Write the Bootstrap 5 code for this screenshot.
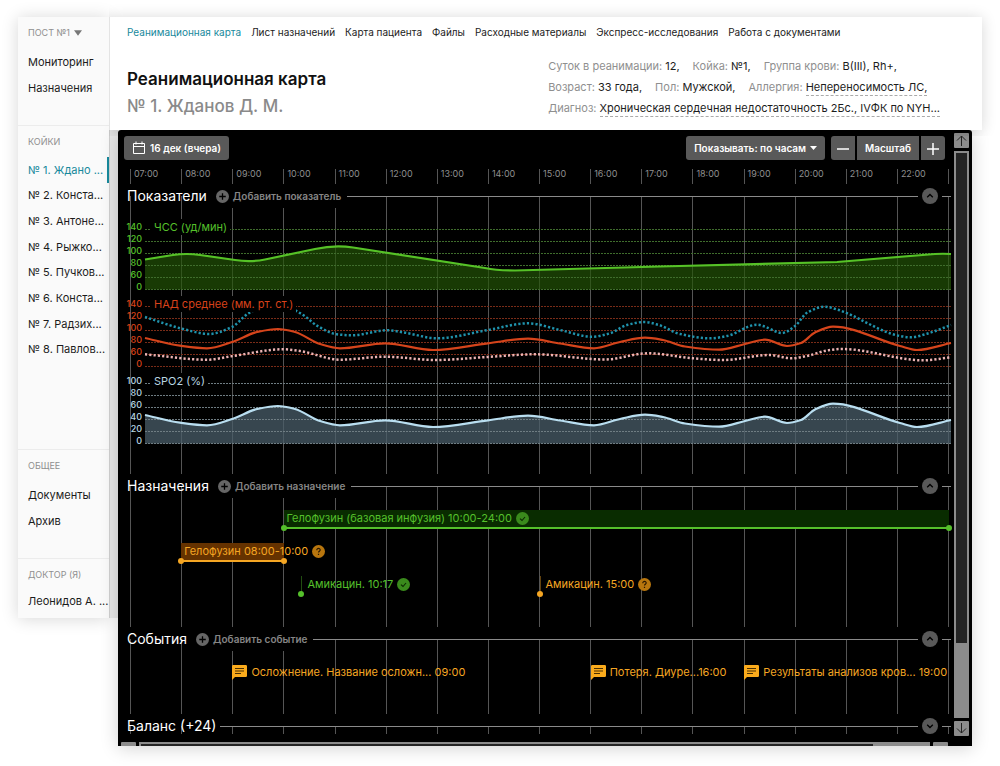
<!DOCTYPE html>
<html lang="ru">
<head>
<meta charset="utf-8">
<meta name="viewport" content="width=device-width, initial-scale=1">
<title>Реанимационная карта</title>
<link href="https://cdn.jsdelivr.net/npm/bootstrap@5.3.0/dist/css/bootstrap.min.css" rel="stylesheet">
<script src="https://cdn.jsdelivr.net/npm/bootstrap@5.3.0/dist/js/bootstrap.bundle.min.js"></script>
<style>
  :root { --teal: #17899c; --key: #595959; --bar: #8c8c8c; --rule: #8a8a8a; --ok: #55c02b; --wait: #f5a623; }
  body { font-family: Inter, "Liberation Sans", sans-serif; font-size: 11px; line-height: 16px; color: #1c1c1c; background: #fff; }
  a { color: inherit; text-decoration: none; }
  button { font-family: inherit; }
  .frame { padding: 17px 18px 21px; }

  .side { flex: 0 0 91px; min-width: 0; width: 91px; background: #fafafa; box-shadow: 1px 0 0 #cfcfcf, 9px 0 0 #e8e8e8, 0 1px 16px rgba(0,0,0,.16); }
  .side-part { padding: 8px 0 0 10px; border-top: 1px solid #ececec; }
  .side-part:first-child { border-top: 0; }
  .side-label { font-size: 9px; color: #8f8f8f; line-height: 16px; border: 0; background: none; padding: 0; margin: 0; font-weight: 400; }
  .side-list a { display: flex; align-items: center; height: 100%; white-space: nowrap; }
  .two { height: 52px; margin-top: 8px; }
  .beds { height: 205px; margin: 7px 0 87px; }
  .beds .active { color: var(--teal); border-right: 2px solid var(--teal); }
  .me { padding: 10px 0 9px; }

  .head { background: #fff; box-shadow: 0 1px 14px rgba(0,0,0,.16); height: 113px; padding: 7px 42px 0 17px; z-index: 2; clip-path: inset(-20px -20px -6px 0); border-left: 1px solid #e4e4e4; }
  .tabs { font-size: 10px; gap: 10px; white-space: nowrap; }
  .tabs .active { color: var(--teal); }
  .titles { padding-top: 10px; }
  .head h1, .head h2 { font-size: 17px; line-height: 27px; font-weight: 600; margin: 0; color: #111; }
  .head h2 { color: #8a8a8a; font-weight: 500; }
  .facts { flex: 0 0 389px; white-space: nowrap; line-height: 21px; }
  .facts dl { margin: 0; gap: 13px; }
  .facts dt { font-weight: 400; color: #8f8f8f; }
  .facts dd { margin: 0 0 0 3px; }
  .hint { border-bottom: 1px dashed #aaa; line-height: 16px; display: inline-block; }

  .board { background: #000; color: #fff; margin: 0 10px 0 9px; border-radius: 3px 3px 0 0; box-shadow: 0 2px 18px rgba(0,0,0,.18); z-index: 1; }
  .key { background: var(--key); color: #fff; border: 0; border-radius: 3px; height: 24px; font-size: 10px; font-weight: 600; line-height: 24px; padding: 0 8px; white-space: nowrap; }
  .tools { padding: 6px 6px 0; }
  .zoomer { gap: 2px; margin-left: 6px; }
  .zoomer .key { border-radius: 0; }
  .zoomer .key:first-child { border-radius: 3px 0 0 3px; }
  .zoomer .key:last-child { border-radius: 0 3px 3px 0; }
  .zoomer .square { width: 24px; padding: 0; }

  .ruler { margin: 9px 2px 0 12px; height: 15px; font-size: 9px; line-height: 9px; color: #8f8f8f; }
  .ruler span { flex: 1 1 0; border-left: 1px solid #555; padding-left: 3px; }
  .ruler span:last-child, .lines i:last-child { border-right: 1px solid #555; }
  .strip { position: relative; margin: 0 0 0 9px; }
  .lines { position: absolute; inset: 12px 2px 0 3px; display: flex; }
  .lines i { flex: 1 1 0; border-left: 1px solid #555; }
  .strip > :not(.lines) { position: relative; }
  .strip-head { height: 24px; }
  .strip-head h3 { font-size: 14px; line-height: 24px; margin: 0; font-weight: 400; white-space: nowrap; }
  .add { background: #000; border: 0; color: #858585; font-size: 10px; font-weight: 600; padding: 0 6px 0 9px; height: 24px; gap: 4px; white-space: nowrap; }
  .rule-line { height: 1px; background: var(--rule); }
  .fold { border: 0; background: #000; padding: 0 4px; height: 16px; display: flex; }

  .charts { padding: 13px 0 27px; gap: 5px; }
  .scale { width: 15px; margin-right: 3px; font-size: 9px; line-height: 12px; font-weight: 500; display: flex; flex-direction: column; align-items: flex-end; }
  .plot { display: block; flex: 1 1 0; min-width: 0; height: 72px; overflow: visible; }
  .plot path, .plot line { vector-effect: non-scaling-stroke; fill: none; }
  .chart-name { position: absolute; left: 24px; top: -2px; background: #000; padding: 0 3px; line-height: 16px; font-size: 11px; }
  .green { color: var(--ok); } .red { color: #d8421a; } .ice { color: #b8d6e2; }

  .rows { margin: 0 2px 0 3px; display: grid; grid-template-columns: repeat(16, minmax(0, 1fr)); white-space: nowrap; }
  .meds { padding-top: 12px; height: 129px; grid-auto-rows: 33px; align-items: start; }
  .dose { height: 19px; position: relative; border-bottom: 2px solid; padding-left: 3px; line-height: 17px; font-size: 11px; gap: 4px; }
  .dose::before, .both::after { content: ""; position: absolute; bottom: -4px; left: -3px; width: 6px; height: 6px; border-radius: 3px; background: currentColor; }
  .both::after { left: auto; right: -3px; }
  .moment { border-bottom-color: transparent; padding-left: 6px; }
  .moment::after { content: ""; position: absolute; left: 0; top: 0; bottom: 0; width: 1px; background: currentColor; opacity: .4; }
  .given { color: var(--ok); } .given.both { background: #092c00; }
  .due { color: var(--wait); } .due.both { background: #653200; }
  .notes { padding-top: 13px; height: 63px; align-items: start; color: var(--wait); font-size: 11px; }
  .notes a { gap: 4px; line-height: 17px; }

  .vbar { width: 15px; margin: 3px 3px 0 3px; padding-bottom: 10px; }
  .scroll-key { border: 0; padding: 0; background: var(--bar); width: 15px; height: 15px; border-radius: 1px; display: flex; }
  .vtrack { background: var(--bar); width: 15px; margin: 3px 0; padding: 2px; flex: 1 1 0; }
  .vtrack div { background: #242424; height: 87%; }
  .hbar { height: 4px; overflow: hidden; padding: 0 3px; gap: 3px; }
  .htrack { background: var(--bar); padding: 2px 2px 0; height: 4px; }
  .htrack div { background: #242424; height: 2px; width: 93%; }
</style>
</head>
<body>
<div class="frame d-flex align-items-start">
  <aside class="side">
    <div class="side-part">
      <button class="side-label d-flex align-items-center gap-1" type="button">ПОСТ №1 <svg width="8" height="6" viewBox="0 0 9 6"><path d="M0 0h9L4.500 6z" fill="#777"/></svg></button>
      <ul class="side-list two list-unstyled d-flex flex-column mb-4">
        <li class="flex-fill"><a href="#">Мониторинг</a></li>
        <li class="flex-fill"><a href="#">Назначения</a></li>
      </ul>
    </div>
    <div class="side-part">
      <h6 class="side-label">КОЙКИ</h6>
      <ul class="side-list beds list-unstyled d-flex flex-column">
        <li class="flex-fill"><a class="active" href="#">№ 1. Ждано ...</a></li>
        <li class="flex-fill"><a href="#">№ 2. Конста...</a></li>
        <li class="flex-fill"><a href="#">№ 3. Антоне...</a></li>
        <li class="flex-fill"><a href="#">№ 4. Рыжко...</a></li>
        <li class="flex-fill"><a href="#">№ 5. Пучков...</a></li>
        <li class="flex-fill"><a href="#">№ 6. Конста...</a></li>
        <li class="flex-fill"><a href="#">№ 7. Радзих...</a></li>
        <li class="flex-fill"><a href="#">№ 8. Павлов...</a></li>
      </ul>
    </div>
    <div class="side-part">
      <h6 class="side-label">ОБЩЕЕ</h6>
      <ul class="side-list two list-unstyled d-flex flex-column mb-4">
        <li class="flex-fill"><a href="#">Документы</a></li>
        <li class="flex-fill"><a href="#">Архив</a></li>
      </ul>
    </div>
    <div class="side-part">
      <h6 class="side-label">ДОКТОР (Я)</h6>
      <ul class="side-list me list-unstyled mb-0"><li><a href="#">Леонидов А. ...</a></li></ul>
    </div>
  </aside>

  <div class="flex-grow-1" style="min-width:0">
    <header class="head position-relative">
      <nav class="tabs d-flex">
        <a class="active" href="#">Реанимационная карта</a>
        <a href="#">Лист назначений</a>
        <a href="#">Карта пациента</a>
        <a href="#">Файлы</a>
        <a href="#">Расходные материалы</a>
        <a href="#">Экспресс-исследования</a>
        <a href="#">Работа с документами</a>
      </nav>
      <div class="d-flex justify-content-between pt-3">
        <div class="titles">
          <h1>Реанимационная карта</h1>
          <h2>№ 1. Жданов Д. М.</h2>
        </div>
        <div class="facts">
          <dl class="d-flex">
            <div class="d-flex"><dt>Суток в реанимации:</dt><dd>12,</dd></div>
            <div class="d-flex"><dt>Койка:</dt><dd>№1,</dd></div>
            <div class="d-flex"><dt>Группа крови:</dt><dd>B(III), Rh+,</dd></div>
          </dl>
          <dl class="d-flex">
            <div class="d-flex"><dt>Возраст:</dt><dd>33 года,</dd></div>
            <div class="d-flex"><dt>Пол:</dt><dd>Мужской,</dd></div>
            <div class="d-flex"><dt>Аллергия:</dt><dd><span class="hint">Непереносимость ЛС,</span></dd></div>
          </dl>
          <dl class="d-flex">
            <div class="d-flex"><dt>Диагноз:</dt><dd><span class="hint">Хроническая сердечная недостаточность 2Бс., IVФК по NYH...</span></dd></div>
          </dl>
        </div>
      </div>
    </header>

    <main class="board position-relative">
      <div class="d-flex">
        <div class="flex-grow-1" style="min-width:0">
          <div class="tools d-flex">
            <button class="key d-flex align-items-center gap-1" type="button">
              <svg width="14" height="14" viewBox="0 0 14 14" fill="none" stroke="#fff"><path d="M1.500 2.500h11v10h-11zM1.500 5.500h11M4 .5v3M10 .5v3"/></svg>
              16 дек (вчера)
            </button>
            <button class="key ms-auto d-flex align-items-center gap-1" type="button">Показывать: по часам
              <svg width="7" height="4" viewBox="0 0 7 4"><path d="M0 0h7L3.500 4z" fill="#fff"/></svg>
            </button>
            <div class="zoomer d-flex">
              <button class="key square" type="button" aria-label="Уменьшить"><svg width="12" height="12" viewBox="0 0 12 12"><path d="M0 6h12" stroke="#fff" stroke-width="1.500"/></svg></button>
              <button class="key" type="button">Масштаб</button>
              <button class="key square" type="button" aria-label="Увеличить"><svg width="12" height="12" viewBox="0 0 12 12"><path d="M0 6h12M6 0v12" stroke="#fff" stroke-width="1.500"/></svg></button>
            </div>
          </div>

          <div class="ruler d-flex" id="ruler"></div>

          <section class="strip">
            <div class="lines"></div>
            <div class="strip-head d-flex align-items-center">
              <h3>Показатели</h3>
              <button class="add d-flex align-items-center" type="button"><svg width="13" height="13"><use href="#plus"/></svg>Добавить показатель</button>
              <div class="rule-line flex-grow-1"></div>
              <button class="fold" type="button" aria-label="Свернуть"><svg width="16" height="16"><use href="#up"/></svg></button>
              <div class="rule-line" style="width:9px"></div>
            </div>
            <div class="charts d-flex flex-column" id="charts"></div>
          </section>

          <section class="strip">
            <div class="lines"></div>
            <div class="strip-head d-flex align-items-center">
              <h3>Назначения</h3>
              <button class="add d-flex align-items-center" type="button"><svg width="13" height="13"><use href="#plus"/></svg>Добавить назначение</button>
              <div class="rule-line flex-grow-1"></div>
              <button class="fold" type="button" aria-label="Свернуть"><svg width="16" height="16"><use href="#up"/></svg></button>
              <div class="rule-line" style="width:9px"></div>
            </div>
            <div class="rows meds">
              <div class="dose both given d-flex align-items-center" style="grid-column:4/17;grid-row:1">Гелофузин (базовая инфузия) 10:00-24:00 <svg width="13" height="13"><use href="#check"/></svg></div>
              <div class="dose both due d-flex align-items-center" style="grid-column:2/4;grid-row:2">Гелофузин 08:00-10:00 <svg class="flex-shrink-0" width="13" height="13"><use href="#ask"/></svg></div>
              <div class="dose moment given d-flex align-items-center" style="grid-column:4/9;grid-row:3;margin-left:7%">Амикацин. 10:17 <svg width="13" height="13"><use href="#check"/></svg></div>
              <div class="dose moment due d-flex align-items-center" style="grid-column:9/14;grid-row:3">Амикацин. 15:00 <svg width="13" height="13"><use href="#ask"/></svg></div>
            </div>
          </section>

          <section class="strip">
            <div class="lines"></div>
            <div class="strip-head d-flex align-items-center">
              <h3>События</h3>
              <button class="add d-flex align-items-center" type="button"><svg width="13" height="13"><use href="#plus"/></svg>Добавить событие</button>
              <div class="rule-line flex-grow-1"></div>
              <button class="fold" type="button" aria-label="Свернуть"><svg width="16" height="16"><use href="#up"/></svg></button>
              <div class="rule-line" style="width:9px"></div>
            </div>
            <div class="rows notes">
              <a class="d-flex align-items-center" href="#" style="grid-column:3/10;grid-row:1"><svg width="15" height="15"><use href="#note"/></svg>Осложнение. Название осложн... 09:00</a>
              <a class="d-flex align-items-center" href="#" style="grid-column:10/13;grid-row:1"><svg width="15" height="15"><use href="#note"/></svg>Потеря. Диуре...16:00</a>
              <a class="d-flex align-items-center" href="#" style="grid-column:13/17;grid-row:1"><svg width="15" height="15"><use href="#note"/></svg>Результаты анализов кров... 19:00</a>
            </div>
          </section>

          <section class="strip">
            <div class="lines mb-1"></div>
            <div class="strip-head d-flex align-items-center">
              <h3 class="pe-1">Баланс (+24)</h3>
              <div class="rule-line flex-grow-1"></div>
              <button class="fold" type="button" aria-label="Развернуть"><svg width="16" height="16"><use href="#down"/></svg></button>
              <div class="rule-line" style="width:9px"></div>
            </div>
          </section>
          <div class="hbar d-flex mt-1">
            <div class="scroll-key"></div>
            <div class="htrack flex-grow-1"><div></div></div>
            <div class="scroll-key"></div>
          </div>
        </div>

        <div class="vbar d-flex flex-column">
          <button class="scroll-key" type="button" aria-label="Вверх"><svg width="15" height="15" viewBox="0 0 15 15" fill="none" stroke="#222"><path d="M7.500 13V3M3 7.500L7.500 3 12 7.500"/></svg></button>
          <div class="vtrack"><div></div></div>
          <button class="scroll-key" type="button" aria-label="Вниз"><svg width="15" height="15" viewBox="0 0 15 15" fill="none" stroke="#222"><path d="M7.500 2v10M3 7.500L7.500 12 12 7.500"/></svg></button>
        </div>
      </div>
    </main>
  </div>
</div>

<svg width="0" height="0" class="position-absolute">
  <symbol id="plus" viewBox="0 0 12 12"><circle cx="6" cy="6" r="6" fill="#666"/><path d="M3 6h6M6 3v6" stroke="#000" stroke-width="1.200"/></symbol>
  <symbol id="up" viewBox="0 0 16 16"><circle cx="8" cy="8" r="8" fill="#595959"/><path d="M5.200 9.300L8 6.500l2.800 2.800" fill="none" stroke="#000" stroke-width="1.300"/></symbol>
  <symbol id="down" viewBox="0 0 16 16"><circle cx="8" cy="8" r="8" fill="#595959"/><path d="M5.200 6.700L8 9.500l2.800-2.800" fill="none" stroke="#000" stroke-width="1.300"/></symbol>
  <symbol id="check" viewBox="0 0 13 13"><circle cx="6.500" cy="6.500" r="6.500" fill="#3a8a1c"/><path d="M4 6.700l2 1.800 3-3.500" fill="none" stroke="#0a2800" stroke-width="1.100"/></symbol>
  <symbol id="ask" viewBox="0 0 13 13"><circle cx="6.500" cy="6.500" r="6.500" fill="#b8760e"/><path d="M4.800 5.200c0-2.400 3.500-2.200 3.400-.1 0 1.200-1.700 1.200-1.700 2.500M6.500 8.700v1.200" fill="none" stroke="#2a1800" stroke-width="1.200"/></symbol>
  <symbol id="note" viewBox="0 0 15 15"><path d="M1.200 0h12.600Q15 0 15 1.200v9.600Q15 12 13.800 12H3l-3 3V1.200Q0 0 1.200 0z" fill="#fbab1c"/><path d="M3 3.500h9M3 6h9M3 8.500h6" stroke="#4a2f00" stroke-width="1.200"/></symbol>
</svg>

<script>
  // Hour marks
  const ruler = document.getElementById('ruler');
  for (let h = 7; h < 23; h++) {
    const s = document.createElement('span');
    s.textContent = String(h).padStart(2, '0') + ':00';
    ruler.append(s);
  }
  document.querySelectorAll('.lines').forEach(l => l.innerHTML = '<i></i>'.repeat(16));

  // Smooth line through the measured points
  function curve(p) {
    let d = `M${p[0]} ${p[1]}`;
    const n = p.length / 2, at = i => { i = Math.max(0, Math.min(n - 1, i)); return [p[2 * i], p[2 * i + 1]]; };
    const slope = i => {
      const a = at(i - 1), b = at(i), c = at(i + 1);
      if (i === 0) return (c[1] - b[1]) / (c[0] - b[0]);
      if (i === n - 1) return (b[1] - a[1]) / (b[0] - a[0]);
      const l = (b[1] - a[1]) / (b[0] - a[0]), r = (c[1] - b[1]) / (c[0] - b[0]);
      return l * r <= 0 ? 0 : 2 * l * r / (l + r);
    };
    for (let i = 0; i < n - 1; i++) {
      const a = at(i), b = at(i + 1), w = (b[0] - a[0]) / 3;
      d += `C${a[0] + w} ${a[1] + w * slope(i)} ${b[0] - w} ${b[1] - w * slope(i + 1)} ${b[0]} ${b[1]}`;
    }
    return d;
  }
  const pulse = 'M0 38.500L28 34Q42 32 55 34L90 39Q105 41.500 120 38.500L170 28Q190 23.500 208 26.500L340 47Q352 49.500 370 49.500L515 45.500L692 41L790 33Q798 32.500 806 33';
  const mean = curve([0,40, 35,47.7, 62,50.3, 88,43.7, 112,34, 133,31, 150,34, 175,46, 195,50.3, 240,45.3, 288,52, 343,45.3, 383,40.7, 415,45.5, 449,50.3, 475,44, 500,39.7, 518,42, 540,48.5, 574,51.7, 600,46, 620,41.7, 642,48, 656,45, 670,34.5, 688,28.7, 755,48, 772,52, 806,45]);
  const high = curve([0,19, 37,30.7, 64,36, 87,29, 103,15.7, 130,4, 148,11.3, 160,18.3, 172,27.7, 192,36.3, 207,37.3, 242,32.3, 258,34.3, 292,40.3, 343,32, 383,25.3, 415,32, 447,38.7, 465,35.3, 482,27, 499,24, 513,26.7, 535,36, 565,40.3, 582,38, 612,26.7, 620,28.7, 637,35, 650,28, 663,14, 680,8.7, 692,11.5, 755,38, 766,39.3, 782,35.7, 806,27]);
  const low = curve([0,56.3, 62,61.7, 88,58, 138,51.3, 155,53, 195,61.7, 240,58.7, 290,62, 342,59, 390,56.3, 460,61.5, 503,55.3, 548,60.3, 578,62, 625,57, 646,60.3, 662,58, 682,52.500, 697,51, 778,62.3, 806,59.3]);
  const area = (d, f) => `<path d="${d}V68.500H0Z" style="fill:${f}"/>`;
  const line = (d, c, dash) => `<path d="${d}" stroke="${c}" stroke-width="${dash ? 2.5 : 2.2}" ${dash ? 'stroke-dasharray="2.200 2.100"' : ''}/>`;
  const charts = [
    { name: 'ЧСС (уд/мин)', tone: 'green', grid: '#3f6d2c', marks: [140,120,100,80,60,0], under: area(pulse, 'rgba(36,86,6,.68)'), over: line(pulse, '#56c227') },
    { name: 'НАД среднее (мм. рт. ст.)', tone: 'red', grid: '#7a2c18', marks: [140,120,100,80,60,0], under: '', over: line(high, '#1f93ad', 1) + line(mean, '#d5441b') + line(low, '#edb4b4', 1) },
    { name: 'SPO2 (%)', tone: 'ice', grid: '#6f7d83', marks: [100,80,60,40,20,0], under: area(mean, 'rgba(73,93,106,.75)'), over: line(mean, '#b9def0') }
  ];
  document.getElementById('charts').innerHTML = charts.map(c => `
    <div class="d-flex position-relative ${c.tone}">
      <div class="scale">${c.marks.map(m => `<div>${m}</div>`).join('')}</div>
      <svg class="plot" viewBox="0 0 806 72" preserveAspectRatio="none">${c.under}
        ${c.marks.map((m, i) => `<line x1="0" x2="806" y1="${8.5 + 12 * i}" y2="${8.5 + 12 * i}" stroke="${c.grid}" stroke-dasharray="2 1"/>`).join('')}
        ${c.over}</svg>
      <div class="chart-name">${c.name}</div>
    </div>`).join('');
</script>
</body>
</html>
